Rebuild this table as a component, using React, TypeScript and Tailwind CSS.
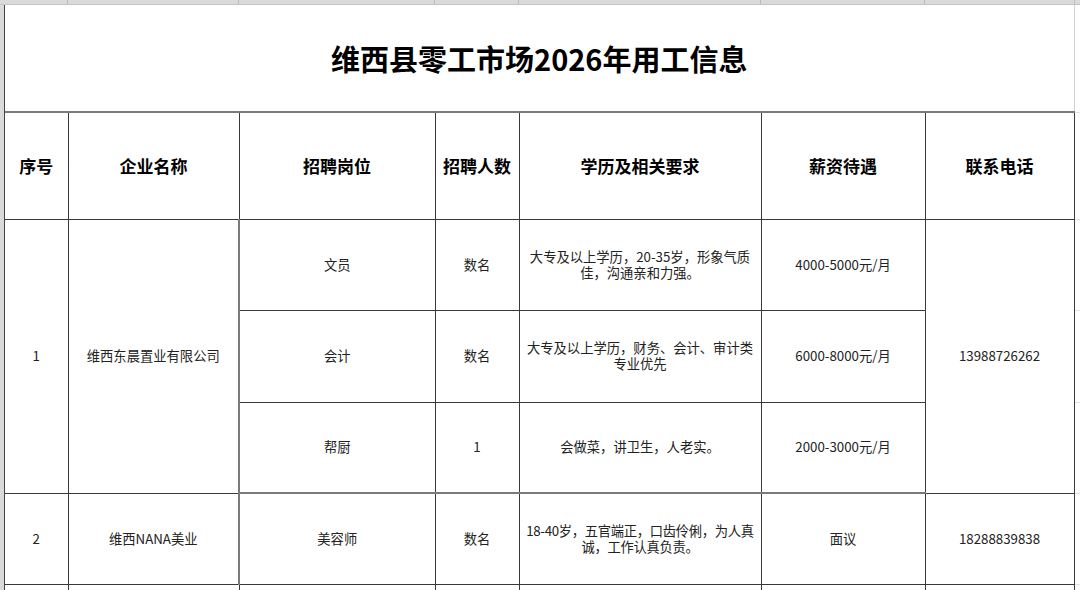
import React from "react";

const td = "border-r border-b border-[#3a3a3a] text-center align-middle text-[13.3px] leading-[16px] text-[#222]";
const th = "border-r border-b border-[#3a3a3a] text-center align-middle text-[17px] font-bold text-black";
const filler = "border-b border-[#e2e2e2]";

function Lines({ a, b }: { a: string; b: string }) {
  return (
    <div className="flex flex-col items-center whitespace-nowrap">
      <span className="block h-[16px]">{a}</span>
      <span className="block h-[16px]">{b}</span>
    </div>
  );
}

export default function App() {
  return (
    <div className="w-[1080px] h-[590px] overflow-hidden bg-white flex flex-col font-['Noto_Sans_CJK_SC',sans-serif]">
      <div className="h-[5px] shrink-0 bg-[#dadada] border-b border-[#c4c4c4] flex">
        <div className="w-[68px] border-r border-[#bcbcbc]" />
        <div className="w-[171px] border-r border-[#bcbcbc]" />
        <div className="w-[196px] border-r border-[#bcbcbc]" />
        <div className="w-[84px] border-r border-[#bcbcbc]" />
        <div className="w-[242px] border-r border-[#bcbcbc]" />
        <div className="w-[164px] border-r border-[#bcbcbc]" />
        <div className="w-[150px] border-r border-[#bcbcbc]" />
      </div>
      <div className="flex flex-1 min-h-0">
        <div className="w-[5px] shrink-0 bg-[#dadada] border-r border-[#444]" />
        <table className="table-fixed border-collapse w-[1075px] shrink-0">
          <colgroup>
            <col className="w-[63px]" />
            <col className="w-[171px]" />
            <col className="w-[196px]" />
            <col className="w-[84px]" />
            <col className="w-[242px]" />
            <col className="w-[164px]" />
            <col className="w-[149px]" />
            <col className="w-[6px]" />
          </colgroup>
          <tbody>
            <tr className="h-[107px]">
              <td colSpan={7} className="border-r border-[#d0d0d0] border-b-2 border-b-[#7a7a7a] text-center align-middle text-[29px] font-bold text-black leading-none">
                维西县零工市场2026年用工信息
              </td>
              <td className={filler} />
            </tr>
            <tr className="h-[107px]">
              <td className={th}>序号</td>
              <td className={th}>企业名称</td>
              <td className={th}>招聘岗位</td>
              <td className={th}>招聘人数</td>
              <td className={th}>学历及相关要求</td>
              <td className={th}>薪资待遇</td>
              <td className={th}>联系电话</td>
              <td className={filler} />
            </tr>
            <tr className="h-[91px]">
              <td rowSpan={3} className={td}>1</td>
              <td rowSpan={3} className={`${td} border-r-2 border-r-[#7a7a7a]`}>维西东晨置业有限公司</td>
              <td className={td}>文员</td>
              <td className={td}>数名</td>
              <td className={td}>
                <Lines a="大专及以上学历，20-35岁，形象气质" b="佳，沟通亲和力强。" />
              </td>
              <td className={td}>4000-5000元/月</td>
              <td rowSpan={3} className={td}>13988726262</td>
              <td className={filler} />
            </tr>
            <tr className="h-[92px]">
              <td className={td}>会计</td>
              <td className={td}>数名</td>
              <td className={td}>
                <Lines a="大专及以上学历，财务、会计、审计类" b="专业优先" />
              </td>
              <td className={td}>6000-8000元/月</td>
              <td className={filler} />
            </tr>
            <tr className="h-[91px]">
              <td className={`${td} border-b-2 border-b-[#7a7a7a]`}>帮厨</td>
              <td className={`${td} border-b-2 border-b-[#7a7a7a]`}>1</td>
              <td className={`${td} border-b-2 border-b-[#7a7a7a]`}>会做菜，讲卫生，人老实。</td>
              <td className={`${td} border-b-2 border-b-[#7a7a7a]`}>2000-3000元/月</td>
              <td className={filler} />
            </tr>
            <tr className="h-[91px]">
              <td className={td}>2</td>
              <td className={`${td} border-r-2 border-r-[#7a7a7a]`}>维西NANA美业</td>
              <td className={td}>美容师</td>
              <td className={td}>数名</td>
              <td className={`${td} tracking-[-0.3px]`}>
                <Lines a="18-40岁，五官端正，口齿伶俐，为人真" b="诚，工作认真负责。" />
              </td>
              <td className={td}>面议</td>
              <td className={td}>18288839838</td>
              <td className={filler} />
            </tr>
            <tr className="h-[91px]">
              <td className={td}>&nbsp;</td>
              <td className={td}>&nbsp;</td>
              <td className={td}>&nbsp;</td>
              <td className={td}>&nbsp;</td>
              <td className={td}>&nbsp;</td>
              <td className={td}>&nbsp;</td>
              <td className={td}>&nbsp;</td>
              <td className={filler} />
            </tr>
          </tbody>
        </table>
        <div className="flex-1" />
      </div>
    </div>
  );
}
